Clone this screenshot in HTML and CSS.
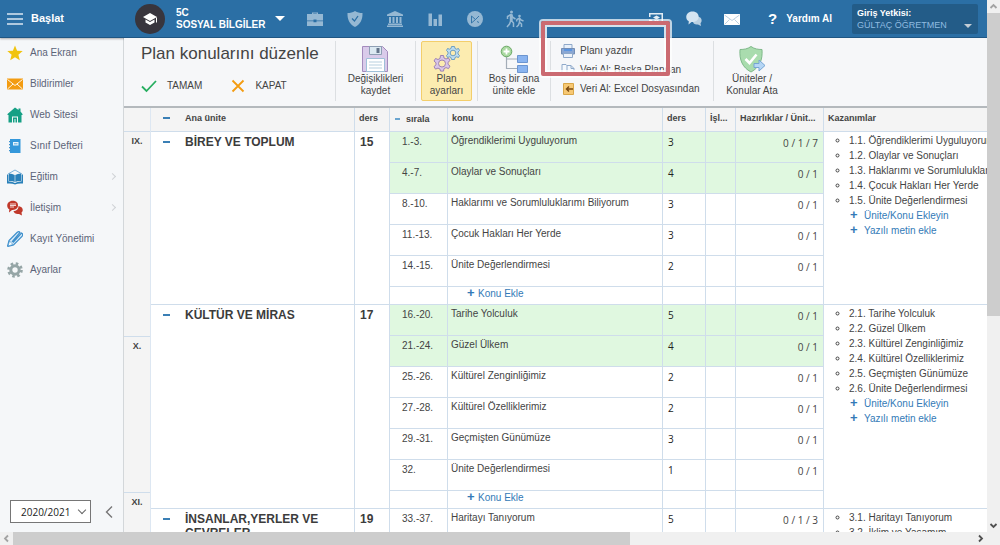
FILE: index.html
```html
<!DOCTYPE html>
<html lang="tr">
<head>
    <meta charset="UTF-8">
    <title>Plan konularını düzenle</title>
    <link rel="stylesheet" href="styles.css">
</head>
<body>
<div class="window">
    <div class="app">
        <header class="header">
            <button class="start">
                <svg width="16" height="12" viewBox="0 0 16 12"><path d="M0 1h16M0 6h16M0 11h16" stroke="#dce8f2" stroke-width="1.6"/></svg>
                Başlat
            </button>
            <div class="logo">
                <svg width="16" height="14" viewBox="0 0 16 14" fill="#fff"><path d="M8 1 1 5l7 4 7-4z"/><path d="M3.500 7.500v3L8 13l4.500-2.500v-3L8 10z"/><path d="M14 5.500h1v5h-1z"/></svg>
            </div>
            <button class="lesson"><span>5C<br>SOSYAL BİLGİLER</span><i class="caret"></i></button>
            <nav class="shortcuts">
                <button aria-label="Çanta">
                    <svg width="18" height="18" viewBox="0 0 18 18" fill="#95b8d3"><path d="M6 4V2.500h6V4h5v6.500h-6.500V9.500h-3v1H1V4zM7.200 4h3.600v-.5H7.200zM1 11.200h6.500v1h3v-1H17V16H1z"/></svg>
                </button>
                <button aria-label="Güvenlik">
                    <svg width="18" height="18" viewBox="0 0 18 18"><path d="M9 1c2.500 1.500 4.500 2 7.500 2 .3 7-2.500 11.500-7.500 14C4 14.500 1.200 10 1.500 3 4.500 3 6.500 2.500 9 1z" fill="#95b8d3"/><path d="m6 8.500 2.500 2.500 3.500-5" fill="none" stroke="#2b6fa5" stroke-width="1.300"/></svg>
                </button>
                <button aria-label="Kurum">
                    <svg width="18" height="18" viewBox="0 0 18 18" fill="#95b8d3"><path d="m9 1 8 3.500V6H1V4.500zM3 7h2v6H3zM6.500 7h2v6h-2zM10 7h2v6h-2zM13.500 7h2v6h-2zM2 13.500h14V15H2zM1 15.500h16V17H1z"/></svg>
                </button>
                <button aria-label="Raporlar">
                    <svg width="18" height="18" viewBox="0 0 18 18" fill="#95b8d3"><path d="M2.500 3.500H6V16H2.500zM7.500 9H11v7H7.500zM12.500 4.500H16V16h-3.500z"/></svg>
                </button>
                <button aria-label="Pusula">
                    <svg width="18" height="18" viewBox="0 0 18 18"><circle cx="9" cy="9" r="8" fill="#95b8d3"/><path d="M5.500 13V6l4 3.500-4 3.500M9.500 9.500l3.500-3.500M11 11.500l2 1" fill="none" stroke="#2b6fa5" stroke-width=".9"/></svg>
                </button>
                <button aria-label="Öğrenciler">
                    <svg width="20" height="18" viewBox="0 0 20 18" fill="none" stroke="#95b8d3" stroke-width="1.500"><circle cx="6.500" cy="2" r="1.500" fill="#95b8d3" stroke="none"/><path d="M2.500 9V6.500L6 4.500l2 3 2.500 1.500M6 4.500V10l2.500 3v4M6 10l-1.500 4L2 17"/><path d="M5.500 5v5h1.500V5z"/><circle cx="14.500" cy="6" r="1.300" fill="#95b8d3" stroke="none"/><path d="m11.500 11.500.5-2 2.500-1.500 1.500 2 2.500 1M14.500 8v4l2 2v3M14.500 12l-1 3-2 2"/></svg>
                </button>
            </nav>
            <nav class="tools">
                <button aria-label="Yayınla">
                    <svg width="18" height="18" viewBox="0 0 18 18" fill="#e3edf5"><path d="M2 3h14v12h-5v-1.500h3.500v-9h-11V7H2zM9.500 5.500 6 7.500l3.500 2 3.500-2zM7.500 9.500V11l2 1 2-1V9.500l-2 1zM2 9.500q5 0 5.500 5.500H6q-.5-4-4-4zM2 12.500q2 0 2.500 2.500H2z"/></svg>
                </button>
                <button aria-label="Mesajlar">
                    <svg width="18" height="18" viewBox="0 0 18 18"><path d="M9.500 8c4-3 8 0 7 3.500-.3 1-1 1.500-1 1.500l.5 3-3-1.500c-3 .5-5-1-5-3z" fill="#b9d0e2"/><path d="M7.500 1.500c8 0 8.500 10 0 10.500l-1 0L3.500 14.500l.3-3.300C-.8 8.500 1 1.500 7.500 1.500z" fill="#d4e4f1"/></svg>
                </button>
                <button aria-label="Posta">
                    <svg width="18" height="18" viewBox="0 0 18 18"><path d="M1 4h16v11H1z" fill="#fff"/><path d="m1.500 5 7.500 5.500L16.500 5M1.500 14.500l5-5M16.500 14.500l-5-5" fill="none" stroke="#a9c4d9" stroke-width=".8"/></svg>
                </button>
            </nav>
            <button class="help"><b>?</b>Yardım Al</button>
            <button class="user"><span><b>Giriş Yetkisi:</b>GÜLTAÇ ÖĞRETMEN</span><i class="caret"></i></button>
        </header>

        <aside class="sidebar">
            <nav class="menu">
                <a href="#">
                    <svg width="16" height="16" viewBox="0 0 16 16"><path d="m8 .5 2.100 5.200 5.600.4-4.300 3.600 1.400 5.500L8 12.200l-4.800 3 1.400-5.500L.3 6.100l5.600-.4z" fill="#f1c40f"/></svg>
                    Ana Ekran
                </a>
                <a href="#">
                    <svg width="16" height="16" viewBox="0 0 16 16"><path d="M0 2.500h16v11H0z" fill="#f39c12"/><path d="m.5 3.500 7.500 6 7.500-6M.5 13 6 8M15.500 13 10 8" fill="none" stroke="#fff" stroke-width=".9"/></svg>
                    Bildirimler
                </a>
                <a href="#">
                    <svg width="16" height="16" viewBox="0 0 16 16" fill="#16a085"><path d="M8 .5 11.500 3V1.500h2v3L15.500 7v1H14.500v7.500H11V9.500H5v6H1.500V8H.5V7z"/><path d="M6 10.500h4v5H8.500V12h-1v3.500H6z"/></svg>
                    Web Sitesi
                </a>
                <a href="#">
                    <svg width="16" height="16" viewBox="0 0 16 16"><path d="M3 1h10.500v14H3z" fill="#3498db"/><path d="M2 3h2v1.200H2zM2 6h2v1.200H2zM2 9h2v1.200H2zM2 12h2v1.200H2z" fill="#3f93cf"/><path d="M6 4h5.500v3.500H6z" fill="#e9f4fb"/><path d="M7 5.800h3.500" stroke="#3498db" stroke-width=".8"/></svg>
                    Sınıf Defteri
                </a>
                <a href="#">
                    <svg width="16" height="16" viewBox="0 0 16 16"><path d="m1 5 7-4 7 4" fill="none" stroke="#7cb2da"/><path d="M0 5.500h1.500v7Q5 12 8 14q3-2 6.500-1.500v-7H16v9q-5-.5-8 1-3-1.500-8-1z" fill="#2980b9"/><path d="M2 4.500q3.500 0 5.700 1.500v7Q5 11.500 2 12zM14 4.500q-3.500 0-5.700 1.500v7Q11 11.500 14 12z" fill="#2980b9"/></svg>
                    Eğitim<i class="more"></i>
                </a>
                <a href="#">
                    <svg width="16" height="16" viewBox="0 0 16 16"><path d="M11.500 6c5 1 5 5 3 6.500l.5 3-3-1.500c-3 .5-5-1-5.500-3 3 0 5-1.500 5-5z" fill="#c0392b"/><path d="M5.800.8c7 0 7 9 0 9.200L5 10l-3 2.500.3-3.200C-1.500 7 0 .8 5.800.8z" fill="#c0392b"/><path d="M3 4h6M3 5.500h6M3 7h4" stroke="#fff" stroke-width=".8"/></svg>
                    İletişim<i class="more"></i>
                </a>
                <a href="#">
                    <svg width="16" height="16" viewBox="0 0 16 16"><path d="M.5 15.500 2 9.500l8-8Q12-.2 13 1.500L5 11M.5 15.500l6-1.500 8.500-8.500Q16.500 3 14.500 2L6 11.500" fill="#d6e9f7" stroke="#3d8fcc" stroke-width="1.200"/><path d="m2.500 10 3.500 3.500L1 15z" fill="#fff" stroke="#3d8fcc" stroke-width=".7"/></svg>
                    Kayıt Yönetimi
                </a>
                <a href="#">
                    <svg width="16" height="16" viewBox="0 0 16 16" fill="none" stroke="#95a5a6"><circle cx="8" cy="8" r="4.200" stroke-width="3"/><circle cx="8" cy="8" r="6.500" stroke-width="2.600" stroke-dasharray="2.550 2.550"/></svg>
                    Ayarlar
                </a>
            </nav>
            <div class="side-bottom">
                <div class="year">
                    <select aria-label="Öğretim yılı"><option>2020/2021</option></select>
                </div>
                <button class="collapse" aria-label="Menüyü daralt">
                    <svg width="8" height="12" viewBox="0 0 8 12"><path d="M7 .5 1.500 6 7 11.500" fill="none" stroke="#777" stroke-width="1.400"/></svg>
                </button>
            </div>
        </aside>

        <main class="content">
            <div class="toolbar">
                <div class="group title">
                    <h1>Plan konularını düzenle</h1>
                    <div class="actions">
                        <button><svg width="16" height="14" viewBox="0 0 16 14"><path d="m1 7.500 4.500 4.500L15 2" fill="none" stroke="#27ae60" stroke-width="1.800"/></svg>TAMAM</button>
                        <button><svg width="14" height="14" viewBox="0 0 14 14"><path d="m1.500 1.500 11 11M12.500 1.500l-11 11" fill="none" stroke="#f39c12" stroke-width="1.800"/></svg>KAPAT</button>
                    </div>
                </div>
                <div class="group save">
                    <button class="big">
                        <svg width="28" height="28" viewBox="0 0 28 28"><path d="M1.500 1.500h20l5 5v20h-25z" fill="#d9cbea" stroke="#a48bbd"/><path d="M8.500 1.500h12v8h-12z" fill="#dce9f2" stroke="#8e9fb4"/><path d="M15.500 3h3v5h-3z" fill="#64748b"/><path d="M5.500 13.500h18v13h-18z" fill="#fff" stroke="#9fc0d8"/><path d="M8 17h13M8 20h13M8 23h13" stroke="#b7cfdf"/></svg>
                        Değişiklikleri<br>kaydet
                    </button>
                </div>
                <div class="group settings">
                    <button class="big active">
                        <svg width="28" height="28" viewBox="0 0 28 28"><g fill="#d9c6e8" stroke="#9e83b4"><path d="M8.500 10.500h3l.5 2.500 2 1 2.500-1 1.500 2.500-2 1.800v2l2 1.800-1.500 2.500-2.500-1-2 1-.5 2.500h-3L8 24.100l-2-1-2.500 1L2 21.600l2-1.800v-2L2 16l1.500-2.500 2.500 1 2-1z"/><circle cx="10" cy="18.500" r="3.500" fill="#fcecb0"/></g><g fill="#bcdcf0" stroke="#6f9fc0"><path d="M19.500 1.500h3l.5 2 1.500.7 2-.7 1 2-1.500 1.500v2l1.500 1.500-1 2-2-.7-1.500.7-.5 2h-3l-.5-2-1.500-.7-2 .7-1-2L16 9V7l-1.500-1.500 1-2 2 .7 1.500-.7z"/><circle cx="21" cy="8" r="2.800" fill="#fcecb0"/></g></svg>
                        Plan<br>ayarları
                    </button>
                </div>
                <div class="group add">
                    <button class="big">
                        <svg width="28" height="28" viewBox="0 0 28 28"><path d="M6.500 11v12.500H17M6.500 14H17" fill="none" stroke="#a3adb8" stroke-width="1.200"/><path d="M17.500 10.500h10v7h-10zM17.500 20.500h10v7h-10z" fill="#8ab4f0" stroke="#6c95d0"/><circle cx="6.500" cy="6.500" r="5.300" fill="#a9d8a0" stroke="#6aa865"/><path d="M6.500 3.500v6M3.500 6.500h6" stroke="#fff" stroke-width="1.800"/></svg>
                        Boş bir ana<br>ünite ekle
                    </button>
                </div>
                <div class="group list">
                    <button>
                        <svg width="14" height="14" viewBox="0 0 14 14"><path d="M3 .5h8V5H3z" fill="#e8f0fa" stroke="#8fa9ca"/><path d="M.5 4.500h13v5.500H.5z" fill="#8aa7d4" stroke="#748eb5"/><path d="M3 5h8v2H3z" fill="#5b95e0"/><path d="M2.500 9.500h9v4h-9z" fill="#eef3fa" stroke="#8fa9ca"/></svg>
                        Planı yazdır
                    </button>
                    <button>
                        <svg width="14" height="14" viewBox="0 0 14 14" fill="#f5f9fd" stroke="#8fa9ca"><path d="M1 1.500h4l3 3v7H1z"/><path d="M6 2.500h4l3 3v7H6zM10 2.500v3h3"/></svg>
                        Veri Al: Başka Plandan
                    </button>
                    <button>
                        <svg width="14" height="14" viewBox="0 0 14 14"><path d="M2.500 1.500h10v11h-10z" fill="#f7c873" stroke="#d9a648"/><path d="M12 7H6M8 4.500 5.500 7 8 9.500" fill="none" stroke="#7b4a12" stroke-width="1.500"/></svg>
                        Veri Al: Excel Dosyasından
                    </button>
                    <div class="mark"></div>
                </div>
                <div class="group assign">
                    <button class="big">
                        <svg width="28" height="28" viewBox="0 0 28 28"><path d="M13 1.500c3.500 2.500 7 3 11 3 .8 10.500-2.500 18-11 22.500C4.500 22.500 1.200 15 2 4.500c4 0 7.500-.5 11-3z" fill="#a9dcae" stroke="#7fb98a"/><path d="m7.500 14 4 4 7-8.500" fill="none" stroke="#fff" stroke-width="2.600"/><path d="M16 18.500h5v-3.500l6 5.500-6 5.500v-3.500h-5z" fill="#b5d6f5" stroke="#76a5d3"/></svg>
                        Üniteler /<br>Konular Ata
                    </button>
                </div>
            </div>

            <div class="plan">
                <div class="months">
                    <div class="month-head"></div>
                    <div class="month nine">IX.</div>
                    <div class="month ten">X.</div>
                    <div class="month">XI.</div>
                </div>
                <table>
                    <colgroup>
                        <col class="c-unit"><col class="c-hour"><col class="c-order"><col><col class="c-lesson"><col class="c-process"><col class="c-ready"><col class="c-gain">
                    </colgroup>
                    <thead>
                        <tr>
                            <th class="unit"><button class="minus" aria-label="Daralt"></button>Ana ünite</th>
                            <th>ders</th>
                            <th class="order"><button class="minus" aria-label="Daralt"></button>sırala</th>
                            <th>konu</th>
                            <th>ders</th>
                            <th>İşl...</th>
                            <th>Hazırlıklar / Ünit...</th>
                            <th>Kazanımlar</th>
                        </tr>
                    </thead>
                    <tbody>
                        <tr class="done">
                            <td class="unit" rowspan="6"><button class="minus" aria-label="Daralt"></button>BİREY VE TOPLUM</td>
                            <td class="hour" rowspan="6">15</td>
                            <td class="num">1.-3.</td><td>Öğrendiklerimi Uyguluyorum</td><td class="count">3</td><td></td><td class="ready">0 / 1 / 7</td>
                            <td class="gains" rowspan="6">
                                <ul>
                                    <li>1.1. Öğrendiklerimi Uyguluyorum</li>
                                    <li>1.2. Olaylar ve Sonuçları</li>
                                    <li>1.3. Haklarımı ve Sorumluluklarımı Biliyorum</li>
                                    <li>1.4. Çocuk Hakları Her Yerde</li>
                                    <li>1.5. Ünite Değerlendirmesi</li>
                                </ul>
                                <a class="plus" href="#">Ünite/Konu Ekleyin</a>
                                <a class="plus" href="#">Yazılı metin ekle</a>
                            </td>
                        </tr>
                        <tr class="done"><td class="num">4.-7.</td><td>Olaylar ve Sonuçları</td><td class="count">4</td><td></td><td class="ready">0 / 1</td></tr>
                        <tr><td class="num">8.-10.</td><td>Haklarımı ve Sorumluluklarımı Biliyorum</td><td class="count">3</td><td></td><td class="ready">0 / 1</td></tr>
                        <tr><td class="num">11.-13.</td><td>Çocuk Hakları Her Yerde</td><td class="count">3</td><td></td><td class="ready">0 / 1</td></tr>
                        <tr><td class="num">14.-15.</td><td>Ünite Değerlendirmesi</td><td class="count">2</td><td></td><td class="ready">0 / 1</td></tr>
                        <tr class="add-row"><td></td><td><a class="plus" href="#">Konu Ekle</a></td><td></td><td></td><td></td></tr>
                    </tbody>
                    <tbody>
                        <tr class="done">
                            <td class="unit" rowspan="7"><button class="minus" aria-label="Daralt"></button>KÜLTÜR VE MİRAS</td>
                            <td class="hour" rowspan="7">17</td>
                            <td class="num">16.-20.</td><td>Tarihe Yolculuk</td><td class="count">5</td><td></td><td class="ready">0 / 1</td>
                            <td class="gains" rowspan="7">
                                <ul>
                                    <li>2.1. Tarihe Yolculuk</li>
                                    <li>2.2. Güzel Ülkem</li>
                                    <li>2.3. Kültürel Zenginliğimiz</li>
                                    <li>2.4. Kültürel Özelliklerimiz</li>
                                    <li>2.5. Geçmişten Günümüze</li>
                                    <li>2.6. Ünite Değerlendirmesi</li>
                                </ul>
                                <a class="plus" href="#">Ünite/Konu Ekleyin</a>
                                <a class="plus" href="#">Yazılı metin ekle</a>
                            </td>
                        </tr>
                        <tr class="done"><td class="num">21.-24.</td><td>Güzel Ülkem</td><td class="count">4</td><td></td><td class="ready">0 / 1</td></tr>
                        <tr><td class="num">25.-26.</td><td>Kültürel Zenginliğimiz</td><td class="count">2</td><td></td><td class="ready">0 / 1</td></tr>
                        <tr><td class="num">27.-28.</td><td>Kültürel Özelliklerimiz</td><td class="count">2</td><td></td><td class="ready">0 / 1</td></tr>
                        <tr><td class="num">29.-31.</td><td>Geçmişten Günümüze</td><td class="count">3</td><td></td><td class="ready">0 / 1</td></tr>
                        <tr><td class="num">32.</td><td>Ünite Değerlendirmesi</td><td class="count">1</td><td></td><td class="ready">0 / 1</td></tr>
                        <tr class="add-row"><td></td><td><a class="plus" href="#">Konu Ekle</a></td><td></td><td></td><td></td></tr>
                    </tbody>
                    <tbody>
                        <tr>
                            <td class="unit"><button class="minus" aria-label="Daralt"></button>İNSANLAR,YERLER VE ÇEVRELER</td>
                            <td class="hour">19</td>
                            <td class="num">33.-37.</td><td>Haritayı Tanıyorum</td><td class="count">5</td><td></td><td class="ready">0 / 1 / 3</td>
                            <td class="gains">
                                <ul>
                                    <li>3.1. Haritayı Tanıyorum</li>
                                    <li>3.2. İklim ve Yaşamım</li>
                                </ul>
                            </td>
                        </tr>
                    </tbody>
                </table>
            </div>
        </main>
    </div>
    <div class="scroll vertical">
        <svg width="13" height="13" viewBox="0 0 13 13"><path d="m3.500 8 3-3 3 3" fill="none" stroke="#a3a3a3" stroke-width="1.800"/></svg>
        <div class="thumb"></div>
        <svg width="13" height="13" viewBox="0 0 13 13"><path d="m3.500 5 3 3 3-3" fill="none" stroke="#505050" stroke-width="1.800"/></svg>
    </div>
    <div class="scroll horizontal">
        <svg width="13" height="13" viewBox="0 0 13 13"><path d="m8 3.500-3 3 3 3" fill="none" stroke="#a3a3a3" stroke-width="1.800"/></svg>
        <div class="thumb"></div>
        <svg width="13" height="13" viewBox="0 0 13 13"><path d="m5 3.500 3 3-3 3" fill="none" stroke="#505050" stroke-width="1.800"/></svg>
    </div>
    <div class="corner"></div>
</div>
</body>
</html>
```
FILE: styles.css
```css
* {
    margin: 0;
    padding: 0;
    box-sizing: border-box;
}
body {
    font: 10px/15px "Liberation Sans", Arial, sans-serif;
    color: #444;
    background-color: #fff;
}
button {
    border: 0;
    background: none;
    font: inherit;
    color: inherit;
    cursor: pointer;
}
a {
    color: inherit;
    text-decoration: none;
}
svg {
    display: block;
    flex: none;
}

/* window and scrollbars */
.window {
    display: grid;
    grid-template-columns: minmax(0, 1fr) 13px;
    grid-template-rows: minmax(0, 1fr) 13px;
    height: 100vh;
    overflow: hidden;
}
.app {
    display: grid;
    grid-template-columns: 124px minmax(0, 1fr);
    grid-template-rows: 38px minmax(0, 1fr);
    overflow: hidden;
}
.scroll {
    display: flex;
    justify-content: space-between;
    background-color: #f0f0f0;
}
.vertical {
    flex-direction: column;
}
.horizontal {
    grid-row: 2;
    grid-column: 1;
}
.corner {
    background-color: #f0f0f0;
}
.thumb {
    background-color: #cdcdcd;
}
.vertical .thumb {
    height: 57%;
    margin-bottom: auto;
}
.horizontal .thumb {
    width: 62.5%;
    margin-right: auto;
}

/* header */
.header {
    grid-column: 1 / 3;
    display: flex;
    align-items: center;
    background-color: #2b6fa5;
    border-bottom: 1px solid #1f5683;
    box-shadow: 0 1px 2px rgba(0,0,0,0.3);
    color: #fff;
    font-weight: bold;
    z-index: 1;
}
.start {
    display: flex;
    align-items: center;
    gap: 8px;
    width: 135px;
    padding-left: 7px;
    font-size: 11px;
}
.logo {
    display: flex;
    align-items: center;
    justify-content: center;
    width: 30px;
    height: 30px;
    border-radius: 50%;
    background-color: #38353d;
}
.lesson {
    display: flex;
    align-items: center;
    gap: 10px;
    margin-left: 11px;
    text-align: left;
    line-height: 12px;
}
.caret {
    border: 5px solid transparent;
    border-top-color: #fff;
    border-bottom: 0;
}
.shortcuts,
.tools {
    display: flex;
    gap: 16px;
}
.shortcuts {
    margin-left: 18px;
}
.tools {
    gap: 14px;
    margin-left: auto;
}
.shortcuts button,
.tools button {
    display: flex;
    align-items: center;
    justify-content: center;
    width: 24px;
}
.help {
    display: flex;
    align-items: center;
    gap: 9px;
    margin-left: 24px;
}
.help b {
    font-size: 15px;
}
.user {
    display: flex;
    align-items: flex-end;
    justify-content: space-between;
    width: 126px;
    height: 30px;
    margin: 0 9px 0 20px;
    padding: 3px 6px 3px 5px;
    border-radius: 2px;
    background-color: #235c88;
    font-size: 9px;
    line-height: 12px;
    text-align: left;
    color: #8fbbe0;
    font-weight: normal;
}
.user b {
    display: block;
    color: #fff;
}
.user .caret {
    border-width: 4px;
    border-bottom: 0;
    border-top-color: #c3cdd6;
    margin-bottom: 3px;
}

/* left menu */
.sidebar {
    display: flex;
    flex-direction: column;
    justify-content: space-between;
    background-color: #f5f7f9;
    border-right: 1px solid #d3d7da;
    color: #5c6478;
}
.menu a {
    display: flex;
    align-items: center;
    gap: 7px;
    height: 31px;
    padding: 0 8px 2px 7px;
}
.more {
    width: 5px;
    height: 5px;
    margin-left: auto;
    border: solid #d0d3d6;
    border-width: 1px 1px 0 0;
    transform: rotate(45deg);
}
.side-bottom {
    display: flex;
    align-items: center;
    justify-content: space-between;
    padding: 0 10px 9px;
}
.year {
    display: grid;
    align-items: center;
    width: 81px;
    height: 23px;
    border: 1px solid #767676;
    background-color: #fff;
}
.year select {
    grid-area: 1 / 1;
    height: 100%;
    padding-left: 10px;
    border: 0;
    background: none;
    appearance: none;
    color: #222;
    font: 10px "Open Sans", sans-serif;
}
.year::after {
    content: "";
    grid-area: 1 / 1;
    justify-self: end;
    width: 5px;
    height: 5px;
    margin: 0 5px 3px 0;
    border: solid #666;
    border-width: 0 1px 1px 0;
    transform: rotate(45deg);
    pointer-events: none;
}

/* toolbar */
.toolbar {
    display: flex;
    height: 70px;
    padding: 3px 0 5px;
    background-color: #f6f7f9;
    border-bottom: 2px solid #b4b9bd;
}
.group {
    position: relative;
    display: flex;
    justify-content: center;
    flex: none;
    border-right: 1px solid #dcdfe2;
}
.title {
    flex-direction: column;
    justify-content: space-between;
    width: 212px;
    padding: 3px 0 8px 17px;
}
.title h1 {
    font-size: 17px;
    line-height: 20px;
    font-weight: normal;
}
.actions {
    display: flex;
    gap: 29px;
}
.actions button {
    display: flex;
    align-items: center;
    gap: 10px;
}
.save {
    width: 80px;
}
.settings {
    width: 62px;
}
.add {
    width: 73px;
}
.assign {
    width: 76px;
    border: 0;
}
.big {
    display: flex;
    flex-direction: column;
    align-items: center;
    padding: 4px 7px 0;
    line-height: 12px;
    white-space: nowrap;
}
.active {
    padding: 3px 8px 0;
    border: 1px solid #f3ce6b;
    border-radius: 2px;
    background-color: #fcecb0;
}
.list {
    flex-direction: column;
    justify-content: flex-start;
    width: 163px;
    padding-left: 10px;
}
.list button {
    display: flex;
    align-items: center;
    gap: 5px;
    height: 19px;
    white-space: nowrap;
}
.mark {
    position: absolute;
    top: -20px;
    left: -10px;
    width: 129px;
    height: 55px;
    border: 4px solid #cb6a71;
    border-radius: 2px;
    box-shadow: 0 0 0 2px rgba(255,255,255,0.7), inset 0 0 0 2px rgba(255,255,255,0.8);
    z-index: 2;
    pointer-events: none;
}

/* plan table */
.content {
    display: flex;
    flex-direction: column;
    min-width: 0;
    z-index: 2;
}
.plan {
    display: flex;
    flex: 1;
    min-height: 0;
    overflow: hidden;
}
.months {
    flex: none;
    width: 27px;
    background-color: #f4f4f4;
    border-right: 1px solid #dde7f2;
    text-align: center;
    font-weight: bold;
    font-size: 9px;
}
.month-head {
    height: 23px;
}
.month {
    padding-top: 2px;
    border-top: 1px solid #cfddeb;
}
.nine {
    height: 205px;
}
.ten {
    height: 156px;
}
table {
    flex: 1;
    align-self: flex-start;
    width: 100%;
    table-layout: fixed;
    border-collapse: separate;
    border-spacing: 0;
}
.c-unit {
    width: 204px;
}
.c-hour {
    width: 35px;
}
.c-order {
    width: 58px;
}
.c-lesson {
    width: 43px;
}
.c-process {
    width: 30px;
}
.c-ready {
    width: 88px;
}
.c-gain {
    width: 163px;
}
th {
    height: 23px;
    padding: 0 0 3px 4px;
    border-right: 1px solid #cfddeb;
    background-color: #f4f4f4;
    font-size: 9px;
    text-align: left;
    white-space: nowrap;
    overflow: hidden;
}
th:last-child {
    border-right: 0;
}
td {
    height: 31px;
    padding: 1px 0 0 3px;
    border-top: 1px solid #cfddeb;
    border-right: 1px solid #cfddeb;
    vertical-align: top;
    white-space: nowrap;
}
.done td {
    background-color: #e0f8e0;
}
.done .unit,
.done .hour,
.done .gains {
    background-color: #fff;
}
td.unit,
td.hour {
    padding-top: 3px;
    font-size: 12px;
    line-height: 14px;
    font-weight: bold;
    white-space: normal;
    color: #3c3c3c;
}
td.hour {
    padding-left: 5px;
}
th.unit,
td.unit {
    padding-left: 34px;
}
.minus {
    float: left;
    width: 7px;
    height: 2px;
    margin: 6px 0 0 -22px;
    background-color: #3a7fb5;
}
th.order {
    padding: 0 0 0 16px;
}
.order .minus {
    width: 5px;
    margin-left: -11px;
    background-color: #6ba5cf;
}
td.num {
    padding-left: 12px;
    padding-top: 2px;
}
td.count {
    padding: 3px 0 0 5px;
    font-family: "Open Sans", sans-serif;
    color: #222;
}
td.ready {
    padding: 4px 5px 0 0;
    font-family: "Open Sans", sans-serif;
    text-align: right;
}
.add-row td {
    height: 18px;
    padding-top: 0;
    line-height: 14px;
}
.plus {
    display: block;
    padding-left: 16px;
    color: #337ab7;
}
.plus::before {
    content: "+";
    display: inline-block;
    width: 11px;
    font-weight: bold;
    font-size: 13px;
    line-height: 10px;
}
td.gains {
    overflow: hidden;
    border-right: 0;
}
.gains ul {
    padding-left: 22px;
    list-style: circle;
}
.gains .plus {
    padding-left: 23px;
}
.gains .plus::before {
    width: 14px;
}
```
